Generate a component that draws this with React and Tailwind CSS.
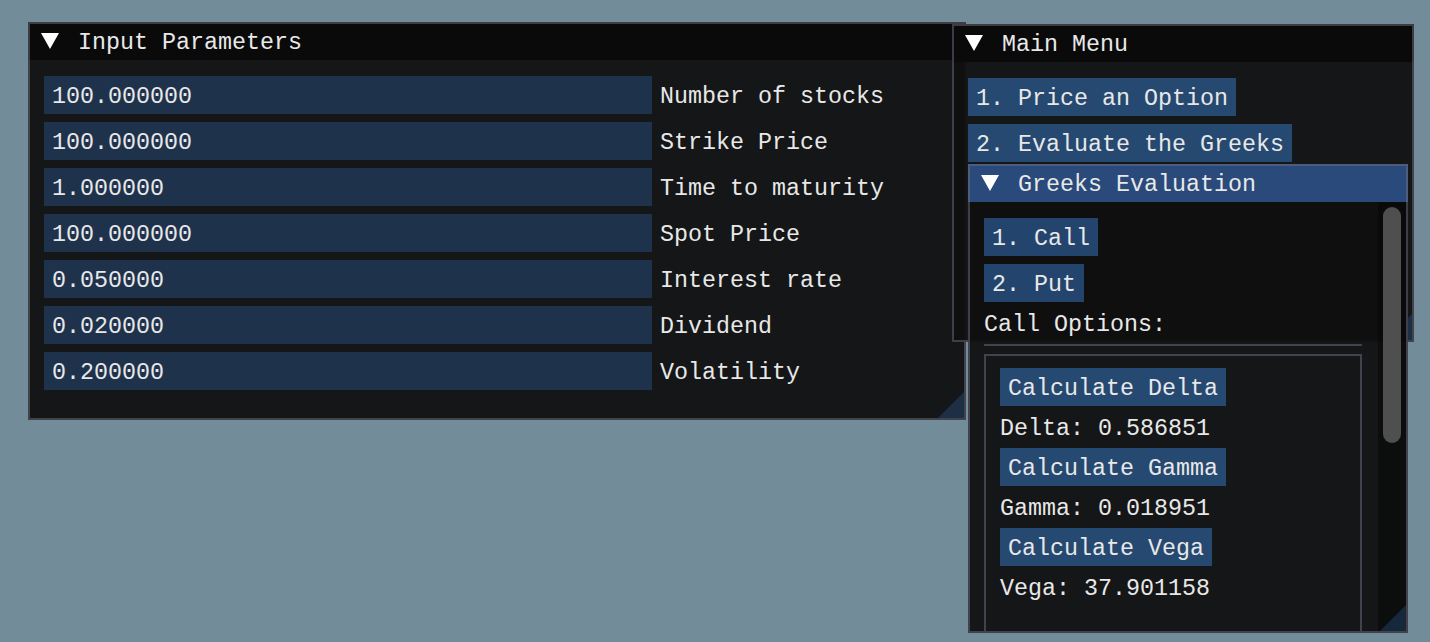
import React from 'react';

const inputs = [
  ['100.000000', 'Number of stocks'],
  ['100.000000', 'Strike Price'],
  ['1.000000', 'Time to maturity'],
  ['100.000000', 'Spot Price'],
  ['0.050000', 'Interest rate'],
  ['0.020000', 'Dividend'],
  ['0.200000', 'Volatility'],
];

function Arrow() {
  return (
    <svg className="absolute left-[13px] top-[11px]" width="18" height="16" viewBox="0 0 18 16">
      <polygon points="0,0 18,0 9,16" fill="#ffffff" />
    </svg>
  );
}

function Grip() {
  return (
    <svg className="absolute right-[2px] bottom-[2px]" width="26" height="26" viewBox="0 0 26 26">
      <polygon points="26,0 26,26 0,26" fill="#4296fa33" />
    </svg>
  );
}

function Window({ title, active, className, children }) {
  return (
    <div className={`absolute flex flex-col overflow-hidden bg-[#0f0f0ff0] ${className}`}>
      <div className={active ? 'relative h-[38px] shrink-0 bg-[#294a7a]' : 'relative h-[38px] shrink-0 bg-[#0a0a0a]'}>
        <Arrow />
        <span className="absolute left-[50px] top-0 leading-[42px] whitespace-pre">{title}</span>
      </div>
      {children}
      <Grip />
      {/* border drawn over everything, like imgui */}
      <div className="absolute inset-0 border-2 border-[#6e6e8080] pointer-events-none" />
    </div>
  );
}

function Button({ children }) {
  return (
    <div className="h-[38px] px-[8px] leading-[42px] bg-[#4296fa66] whitespace-pre">{children}</div>
  );
}

function Text({ children }) {
  return <div className="h-[26px] leading-[30px] whitespace-pre">{children}</div>;
}

export default function App() {
  return (
    <div className="relative w-[1430px] h-[642px] overflow-hidden bg-[#738c99] text-[#e8e8e8] text-[23.33px] font-['Liberation_Mono',monospace]">
      <Window title="Input Parameters" className="left-[28px] top-[22px] w-[938px] h-[398px]">
        <div className="flex flex-col gap-[8px] p-[16px]">
          {inputs.map(([value, label]) => (
            <div key={label} className="flex">
              <div className="w-[608px] h-[38px] px-[8px] leading-[42px] bg-[#294a7a8a] whitespace-pre">{value}</div>
              <div className="ml-[8px] h-[38px] leading-[42px] whitespace-pre">{label}</div>
            </div>
          ))}
        </div>
      </Window>

      <Window title="Main Menu" className="left-[952px] top-[24px] w-[462px] h-[318px]">
        <div className="flex flex-col items-start gap-[8px] p-[16px]">
          <Button>1. Price an Option</Button>
          <Button>2. Evaluate the Greeks</Button>
        </div>
      </Window>

      <Window title="Greeks Evaluation" active className="left-[968px] top-[164px] w-[440px] h-[469px]">
        <div className="flex flex-1 min-h-0 pr-[2px] pb-[2px]">
          <div className="flex-1 min-w-0 overflow-hidden flex flex-col items-start gap-[8px] pt-[16px] px-[16px]">
            <Button>1. Call</Button>
            <Button>2. Put</Button>
            <Text>Call Options:</Text>
            <div className="self-stretch h-[2px] shrink-0 bg-[#6e6e8080]" />
            <div className="self-stretch shrink-0 h-[400px] border-2 border-[#6e6e8080] px-[14px] pt-[12px] flex flex-col items-start gap-[8px]">
              <Button>Calculate Delta</Button>
              <Text>Delta: 0.586851</Text>
              <Button>Calculate Gamma</Button>
              <Text>Gamma: 0.018951</Text>
              <Button>Calculate Vega</Button>
              <Text>Vega: 37.901158</Text>
            </div>
          </div>
          <div className="w-[28px] shrink-0 bg-[#05050587] pt-[5px] pl-[5px]">
            <div className="w-[18px] h-[236px] rounded-[9px] bg-[#4f4f4f]" />
          </div>
        </div>
      </Window>
    </div>
  );
}
